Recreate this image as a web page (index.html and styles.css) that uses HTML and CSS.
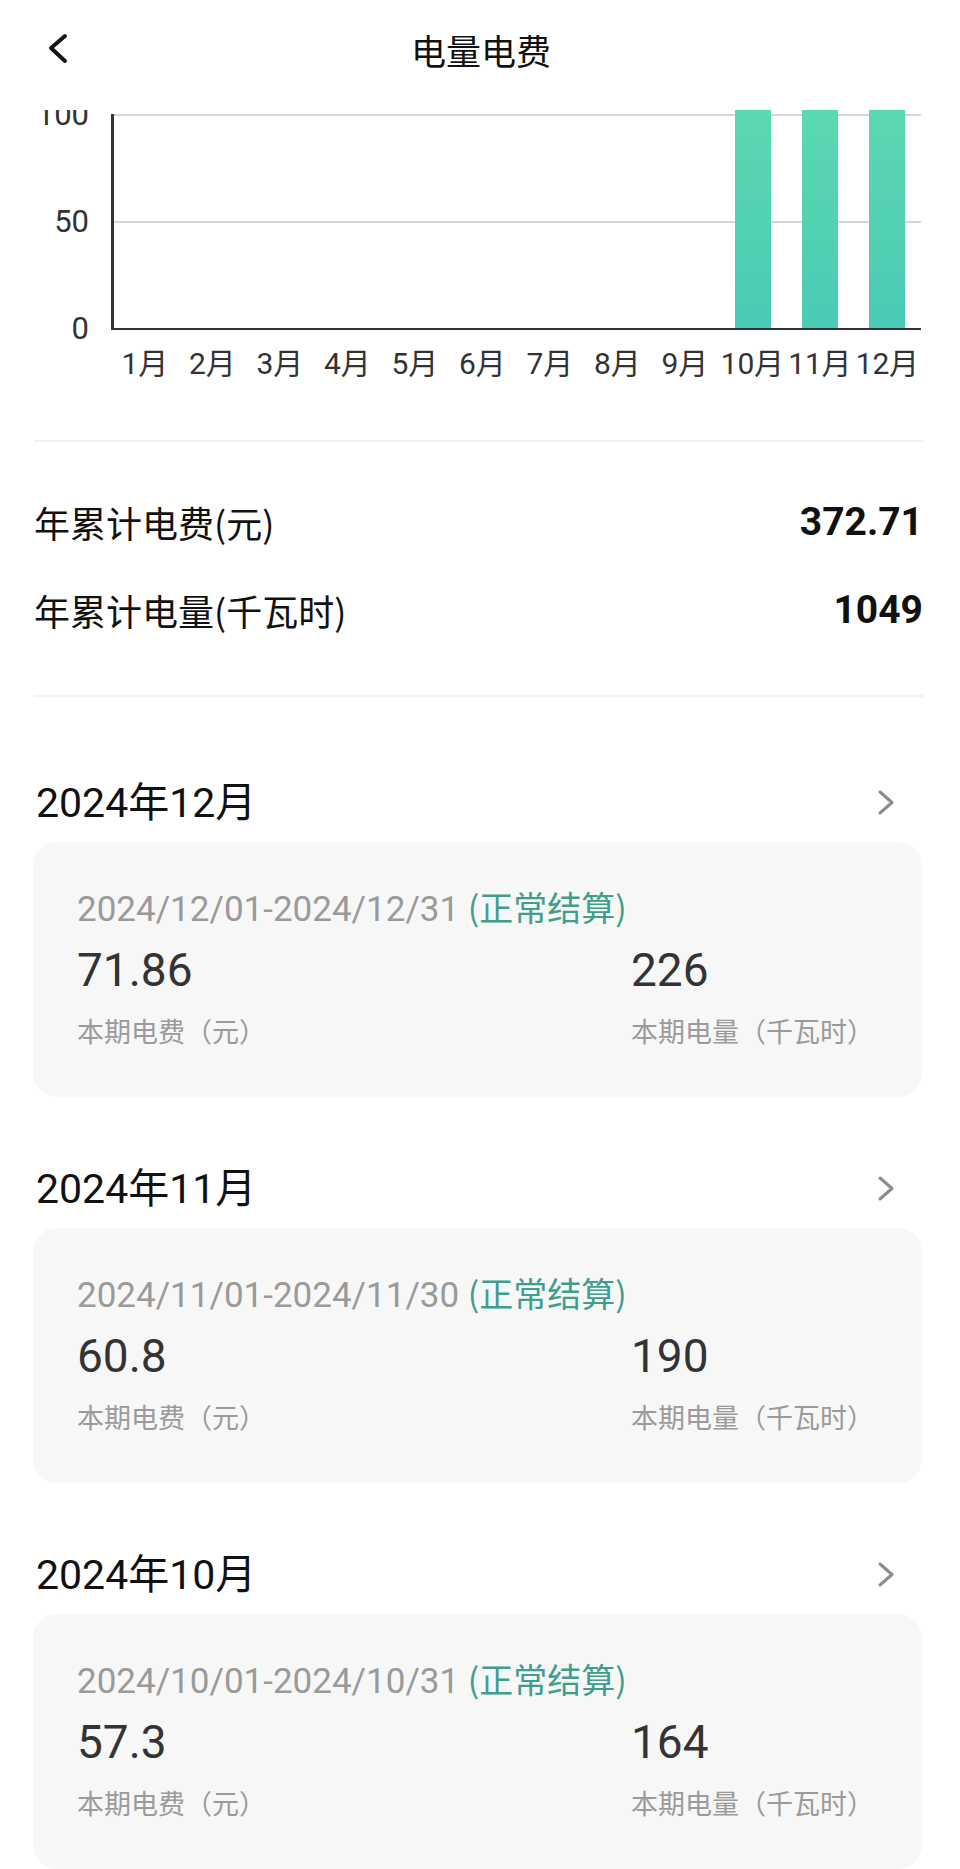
FILE: index.html
```html
<!DOCTYPE html>
<html lang="zh-CN">
<head>
<meta charset="utf-8">
<title>电量电费</title>
<link rel="stylesheet" href="styles.css">
</head>
<body>
<div class="page">
  <header class="topbar">
    <button class="back" aria-label="返回">
      <svg width="24" height="32" viewBox="0 0 24 32"><polyline points="19,3 5,15 19,28" fill="none" stroke="#151515" stroke-width="4" stroke-linecap="round" stroke-linejoin="round"/></svg>
    </button>
    <h1 class="title">电量电费</h1>
  </header>

  <section class="chart">
    <div class="chart-grid">
      <div class="ylabels">
        <span class="ylabel">100</span>
        <span class="ylabel">50</span>
        <span class="ylabel">0</span>
      </div>
      <div class="plot">
        <div class="gridrow"></div>
        <div class="gridrow"></div>
        <div class="bars">
          <div class="col"></div><div class="col"></div><div class="col"></div>
          <div class="col"></div><div class="col"></div><div class="col"></div>
          <div class="col"></div><div class="col"></div><div class="col"></div>
          <div class="col"><div class="bar" style="height:240px"></div></div>
          <div class="col"><div class="bar" style="height:240px"></div></div>
          <div class="col"><div class="bar" style="height:240px"></div></div>
        </div>
      </div>
      <div></div>
      <div class="xlabels">
        <span>1月</span><span>2月</span><span>3月</span><span>4月</span>
        <span>5月</span><span>6月</span><span>7月</span><span>8月</span>
        <span>9月</span><span>10月</span><span>11月</span><span>12月</span>
      </div>
    </div>
  </section>

  <div class="divider"></div>

  <section class="summary">
    <div class="sum-row"><span class="sum-label">年累计电费(元)</span><span class="sum-value">372.71</span></div>
    <div class="sum-row"><span class="sum-label">年累计电量(千瓦时)</span><span class="sum-value">1049</span></div>
  </section>

  <div class="divider"></div>

  <section class="months">
    <div class="month">
      <div class="month-head">
        <span class="month-title">2024年12月</span>
        <svg class="chev" width="20" height="30" viewBox="0 0 20 30"><polyline points="4,4 16,14.5 4,25" fill="none" stroke="#8c8c8c" stroke-width="3" stroke-linecap="round" stroke-linejoin="round"/></svg>
      </div>
      <div class="card">
        <div class="period">2024/12/01-2024/12/31 <span class="status">(正常结算)</span></div>
        <div class="stats">
          <div class="stat"><div class="num">71.86</div><div class="cap">本期电费（元）</div></div>
          <div class="stat"><div class="num">226</div><div class="cap">本期电量（千瓦时）</div></div>
        </div>
      </div>
    </div>

    <div class="month">
      <div class="month-head">
        <span class="month-title">2024年11月</span>
        <svg class="chev" width="20" height="30" viewBox="0 0 20 30"><polyline points="4,4 16,14.5 4,25" fill="none" stroke="#8c8c8c" stroke-width="3" stroke-linecap="round" stroke-linejoin="round"/></svg>
      </div>
      <div class="card">
        <div class="period">2024/11/01-2024/11/30 <span class="status">(正常结算)</span></div>
        <div class="stats">
          <div class="stat"><div class="num">60.8</div><div class="cap">本期电费（元）</div></div>
          <div class="stat"><div class="num">190</div><div class="cap">本期电量（千瓦时）</div></div>
        </div>
      </div>
    </div>

    <div class="month">
      <div class="month-head">
        <span class="month-title">2024年10月</span>
        <svg class="chev" width="20" height="30" viewBox="0 0 20 30"><polyline points="4,4 16,14.5 4,25" fill="none" stroke="#8c8c8c" stroke-width="3" stroke-linecap="round" stroke-linejoin="round"/></svg>
      </div>
      <div class="card">
        <div class="period">2024/10/01-2024/10/31 <span class="status">(正常结算)</span></div>
        <div class="stats">
          <div class="stat"><div class="num">57.3</div><div class="cap">本期电费（元）</div></div>
          <div class="stat"><div class="num">164</div><div class="cap">本期电量（千瓦时）</div></div>
        </div>
      </div>
    </div>
  </section>
</div>
</body>
</html>
```

FILE: styles.css
```css
* { box-sizing: border-box; }
html, body { margin: 0; padding: 0; background: #ffffff; }
body {
  font-family: Roboto, "Noto Sans CJK SC", "Noto Sans", sans-serif;
  color: #111;
}
.page { width: 960px; height: 1869px; overflow: hidden; }

.topbar {
  height: 110px;
  padding-bottom: 10px;
  display: flex;
  align-items: center;
  justify-content: center;
  position: relative;
}
.back {
  position: absolute;
  left: 46px;
  top: 33px;
  border: 0;
  background: none;
  padding: 0;
  width: 24px;
  height: 32px;
}
.back svg { display: block; }
.title {
  margin: 0;
  font-family: "Noto Sans CJK SC", sans-serif;
  font-size: 35px;
  font-weight: 400;
  color: #111;
  line-height: 40px;
  padding-left: 2px;
}

.chart {
  height: 330px;
  padding-top: 4px;
  overflow: hidden;
}
.chart-grid {
  display: grid;
  grid-template-columns: 111px 810px;
}
.ylabels {
  height: 216px;
  display: flex;
  flex-direction: column;
  justify-content: space-between;
  align-items: flex-end;
  padding-right: 22px;
}
.ylabel {
  display: block;
  height: 2px;
  line-height: 2px;
  font-size: 31px;
  color: #333;
  white-space: nowrap;
}
.plot {
  position: relative;
  height: 216px;
  border-left: 3px solid #333;
  border-bottom: 2px solid #333;
  display: flex;
  flex-direction: column;
}
.gridrow {
  flex: 1;
  border-top: 2px solid #d6d6d6;
}
.bars {
  position: absolute;
  left: 0; right: 0; bottom: 0;
  display: grid;
  grid-template-columns: repeat(12, 1fr);
  align-items: end;
}
.col { display: flex; justify-content: center; align-items: flex-end; }
.bar {
  width: 36px;
  background: linear-gradient(180deg, #5cdab1 0%, #4bcab5 100%);
}
.xlabels {
  margin-top: 14px;
  display: grid;
  grid-template-columns: repeat(12, 1fr);
  padding-left: 0;
}
.xlabels span {
  text-align: center;
  font-size: 30px;
  line-height: 40px;
  color: #333;
  white-space: nowrap;
  letter-spacing: -0.3px;
}

.divider {
  height: 2px;
  margin: 0 37px 0 34px;
  background: #f0f0f0;
}

.summary {
  padding: 36px 37px 41px 34px;
}
.sum-row {
  height: 88px;
  display: flex;
  align-items: center;
  justify-content: space-between;
}
.sum-label {
  font-family: "Noto Sans CJK SC", sans-serif;
  font-size: 36px;
  color: #111;
}
.sum-value {
  font-size: 39px;
  font-weight: 700;
  color: #111;
}

.months {
  padding: 0 38px 0 33px;
}
.month { margin-top: 71px; }
.month + .month { margin-top: 57px; }
.month-head {
  height: 70px;
  display: flex;
  align-items: center;
  justify-content: space-between;
  padding: 0 26px 0 3px;
}
.month-title {
  font-size: 41px;
  color: #111;
  line-height: 50px;
}
.chev { display: block; }
.card {
  margin-top: 4px;
  background: #f7f7f7;
  border-radius: 24px;
  padding: 43px 44px 48px 44px;
  height: 255px;
}
.period {
  font-size: 35px;
  line-height: 44px;
  color: #9a9a9a;
  white-space: nowrap;
}
.status {
  color: #3f9f8c;
  font-family: "Noto Sans CJK SC", sans-serif;
  font-size: 34px;
}
.stats {
  margin-top: 8px;
  display: grid;
  grid-template-columns: 554px 1fr;
}
.num {
  font-size: 46px;
  line-height: 60px;
  color: #333;
}
.cap {
  margin-top: 11px;
  font-family: "Noto Sans CJK SC", sans-serif;
  font-size: 27px;
  line-height: 40px;
  color: #9a9a9a;
  white-space: nowrap;
}
```
